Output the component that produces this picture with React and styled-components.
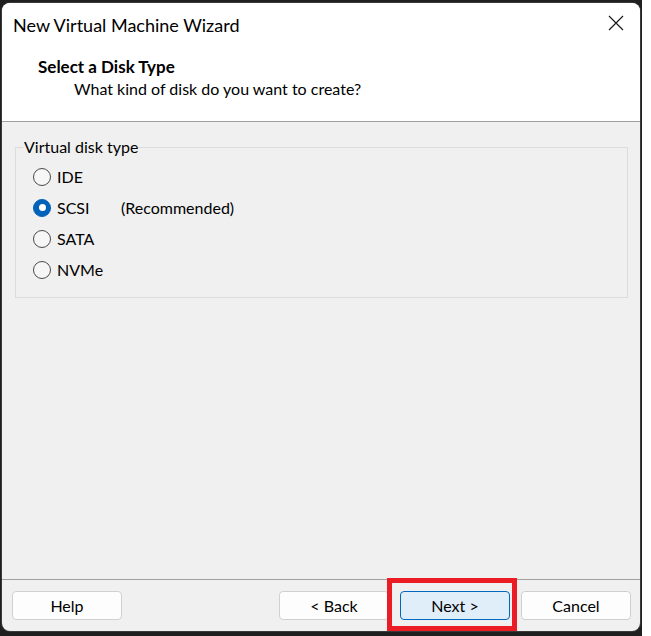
import React from 'react';
import styled, { createGlobalStyle } from 'styled-components';

const GlobalStyle = createGlobalStyle`
  html, body {
    margin: 0;
    padding: 0;
    background: #ffffff;
  }
`;

const Backdrop = styled.div`
  position: relative;
  width: 642px;
  height: 636px;
  box-sizing: border-box;
  padding: 3px 0 0 2px;
  background: #1f1f1f;
  font-family: Lato, "Liberation Sans", sans-serif;
  color: #000;
`;

const Window = styled.div`
  width: 638px;
  height: 628px;
  background: #f0f0f0;
  border-radius: 8px;
  overflow: hidden;
  display: flex;
  flex-direction: column;
  box-shadow: 0 0 0 1px #3a3a3a;
`;

const TitleBar = styled.div`
  height: 44px;
  background: #ffffff;
  display: flex;
  align-items: center;
  justify-content: space-between;
  padding: 0 16px 0 11px;
`;

const Title = styled.div`
  font-size: 18px;
`;

const CloseButton = styled.div`
  display: flex;
  align-items: center;
  justify-content: center;
  width: 16px;
  height: 16px;
  margin-top: -4px;
`;

const Header = styled.div`
  height: 75px;
  background: #ffffff;
  border-bottom: 1px solid #a0a0a0;
  box-sizing: border-box;
  padding: 10px 0 0 36px;
`;

const HeaderTitle = styled.div`
  font-size: 17px;
  font-weight: 700;
  line-height: 20px;
`;

const HeaderSub = styled.div`
  font-size: 16px;
  line-height: 20px;
  margin: 2px 0 0 36px;
`;

const Body = styled.div`
  flex: 1;
  padding: 15px 12px 0 13px;
`;

const GroupBox = styled.fieldset`
  margin: 0;
  padding: 0 0 12px 17px;
  border: 1px solid #dcdcdc;
  height: 161px;
  box-sizing: border-box;
`;

const Legend = styled.legend`
  font-size: 16px;
  line-height: 20px;
  padding: 0 1px;
  margin-left: -10px;
`;

const OptionList = styled.div`
  display: flex;
  flex-direction: column;
  padding-top: 4px;
`;

const OptionRow = styled.label`
  display: flex;
  align-items: center;
  height: 31px;
  font-size: 16px;
`;

const RadioCircle = styled.span`
  width: 18px;
  height: 18px;
  box-sizing: border-box;
  border-radius: 50%;
  border: 1px solid ${(p) => (p.checked ? '#0062b8' : '#4a4a4a')};
  background: ${(p) => (p.checked ? '#0062b8' : '#f6f6f6')};
  display: flex;
  align-items: center;
  justify-content: center;
  margin-right: 6px;

  &::after {
    content: '';
    display: ${(p) => (p.checked ? 'block' : 'none')};
    width: 7px;
    height: 7px;
    border-radius: 50%;
    background: #ffffff;
  }
`;

const OptionLabel = styled.span`
  width: 64px;
`;

const Note = styled.span``;

const Footer = styled.div`
  height: 52px;
  border-top: 1px solid #a0a0a0;
  box-sizing: border-box;
  display: flex;
  align-items: flex-start;
  padding: 11px 9px 0 10px;
  gap: 11px;
`;

const Spacer = styled.div`
  flex: 1;
`;

const Button = styled.button`
  width: 110px;
  height: 29px;
  box-sizing: border-box;
  font-family: inherit;
  font-size: 16px;
  color: #000;
  border-radius: 4px;
  border: 1px solid ${(p) => (p.primary ? '#0067c0' : '#d0d0d0')};
  background: ${(p) => (p.primary ? '#e0eef9' : '#fdfdfd')};
  padding: 0;
`;

const Highlight = styled.div`
  position: absolute;
  left: 387px;
  top: 578px;
  width: 130px;
  height: 53px;
  box-sizing: border-box;
  border: 5px solid #ec1c24;
  pointer-events: none;
`;

const options = [
  { id: 'ide', label: 'IDE' },
  { id: 'scsi', label: 'SCSI', note: '(Recommended)' },
  { id: 'sata', label: 'SATA' },
  { id: 'nvme', label: 'NVMe' },
];

const App = () => {
  const selected = 'scsi';

  return (
    <>
      <GlobalStyle />
      <Backdrop>
        <Window>
          <TitleBar>
            <Title>New Virtual Machine Wizard</Title>
            <CloseButton>
              <svg width="16" height="16" viewBox="0 0 16 16">
                <path d="M1 1 L15 15 M15 1 L1 15" stroke="#1a1a1a" strokeWidth="1.2" />
              </svg>
            </CloseButton>
          </TitleBar>
          <Header>
            <HeaderTitle>Select a Disk Type</HeaderTitle>
            <HeaderSub>What kind of disk do you want to create?</HeaderSub>
          </Header>
          <Body>
            <GroupBox>
              <Legend>Virtual disk type</Legend>
              <OptionList>
                {options.map((o) => (
                  <OptionRow key={o.id}>
                    <RadioCircle checked={o.id === selected} />
                    <OptionLabel>{o.label}</OptionLabel>
                    {o.note && <Note>{o.note}</Note>}
                  </OptionRow>
                ))}
              </OptionList>
            </GroupBox>
          </Body>
          <Footer>
            <Button>Help</Button>
            <Spacer />
            <Button>&lt; Back</Button>
            <Button primary>Next &gt;</Button>
            <Button>Cancel</Button>
          </Footer>
        </Window>
        <Highlight />
      </Backdrop>
    </>
  );
};

export default App;
